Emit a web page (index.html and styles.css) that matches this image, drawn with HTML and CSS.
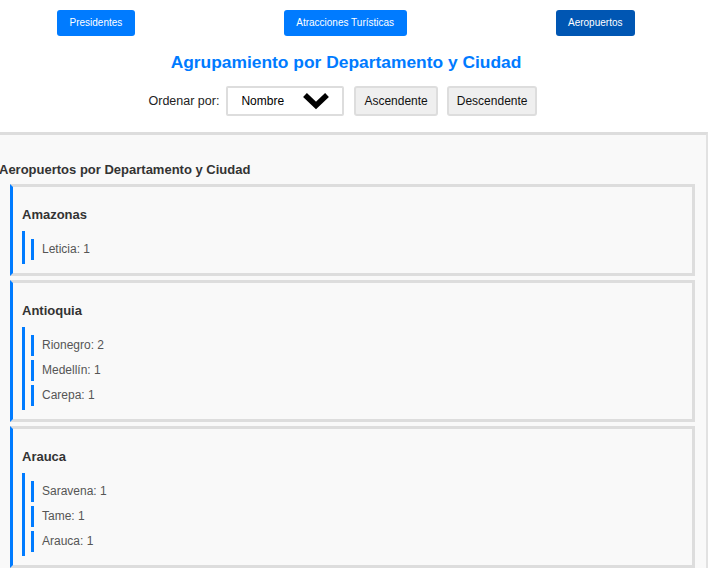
FILE: index.html
```html
<!DOCTYPE html>
<html lang="es">
<head>
<meta charset="utf-8">
<title>Aeropuertos</title>
<link rel="stylesheet" href="styles.css">
</head>
<body>
<nav class="nav">
  <button class="nav-btn">Presidentes</button>
  <button class="nav-btn">Atracciones Turísticas</button>
  <button class="nav-btn active">Aeropuertos</button>
</nav>
<header class="head">
  <h1 class="title">Agrupamiento por Departamento y Ciudad</h1>
  <div class="sort">
    <label class="sort-label">Ordenar por:</label>
    <div class="select">
      <span>Nombre</span>
      <svg class="chev" width="28" height="18" viewBox="0 0 28 18"><polyline points="3,3 14,13.5 25,3" fill="none" stroke="#000" stroke-width="5.5" stroke-linejoin="miter"/></svg>
    </div>
    <button class="sort-btn">Ascendente</button>
    <button class="sort-btn">Descendente</button>
  </div>
</header>
<section class="panel">
  <h2 class="panel-title">Aeropuertos por Departamento y Ciudad</h2>
  <div class="card">
    <h3 class="card-title">Amazonas</h3>
    <ul class="list">
      <li class="item">Leticia: 1</li>
    </ul>
  </div>
  <div class="card">
    <h3 class="card-title">Antioquia</h3>
    <ul class="list">
      <li class="item">Rionegro: 2</li>
      <li class="item">Medellín: 1</li>
      <li class="item">Carepa: 1</li>
    </ul>
  </div>
  <div class="card">
    <h3 class="card-title">Arauca</h3>
    <ul class="list">
      <li class="item">Saravena: 1</li>
      <li class="item">Tame: 1</li>
      <li class="item">Arauca: 1</li>
    </ul>
  </div>
</section>
</body>
</html>
```
FILE: styles.css
```css
* { box-sizing: border-box; }
html, body { margin: 0; padding: 0; background: #fff; }
body { font-family: "Liberation Sans", Arial, sans-serif; color: #222; }

.nav {
  display: flex;
  justify-content: space-between;
  padding: 10px 73px 0 57px;
}
.nav-btn {
  font-family: "Liberation Sans", Arial, sans-serif;
  font-size: 10px;
  line-height: 12px;
  height: 26px;
  padding: 7px 12.5px;
  color: #fff;
  background: #007bff;
  border: none;
  border-radius: 3px;
}
.nav-btn.active { background: #0056b3; }

.head { padding-right: 16px; }
.title {
  margin: 16px 0 0;
  text-align: center;
  font-size: 17.4px;
  line-height: 20px;
  font-weight: bold;
  color: #007bff;
}
.sort {
  display: flex;
  justify-content: center;
  align-items: center;
  margin-top: 14px;
  padding-right: 6px;
}
.sort-label { font-size: 12.5px; color: #222; margin-right: 7px; }
.select {
  display: flex;
  align-items: center;
  justify-content: space-between;
  width: 118px;
  height: 30px;
  padding: 0 12px 0 13px;
  background: #fff;
  border: 2px solid #ddd;
  border-radius: 2px;
  font-size: 12px;
  color: #000;
}
.chev { display: block; }
.sort-btn {
  font-family: "Liberation Sans", Arial, sans-serif;
  font-size: 12px;
  height: 30px;
  padding: 0 8px;
  margin-left: 9px;
  background: #efefef;
  border: 2px solid #ddd;
  border-radius: 3px;
  color: #111;
}
.sort .sort-btn:first-of-type { margin-left: 10px; }

.panel {
  margin-top: 16px;
  background: #f9f9f9;
  border-top: 3px solid #ddd;
  border-right: 2px solid #e2e2e2;
  padding: 27px 11px 0 0;
}
.panel-title {
  margin: 0 0 6px -1px;
  font-size: 13px;
  line-height: 16px;
  font-weight: bold;
  color: #333;
}
.card {
  margin: 0 0 4px 10px;
  background: #f9f9f9;
  border: 3px solid #ddd;
  border-left: 3px solid #007bff;
  padding: 8px 10px 9px 9px;
}
.card-title {
  margin: 12px 0 8px;
  font-size: 13px;
  line-height: 16px;
  font-weight: bold;
  color: #333;
}
.list {
  list-style: none;
  margin: 0;
  padding: 8px 0 4px 6px;
  border-left: 3px solid #007bff;
  display: flex;
  flex-direction: column;
  gap: 4px;
}
.item {
  height: 21px;
  line-height: 21px;
  padding-left: 8px;
  border-left: 3px solid #007bff;
  font-size: 12px;
  color: #555;
}
```
